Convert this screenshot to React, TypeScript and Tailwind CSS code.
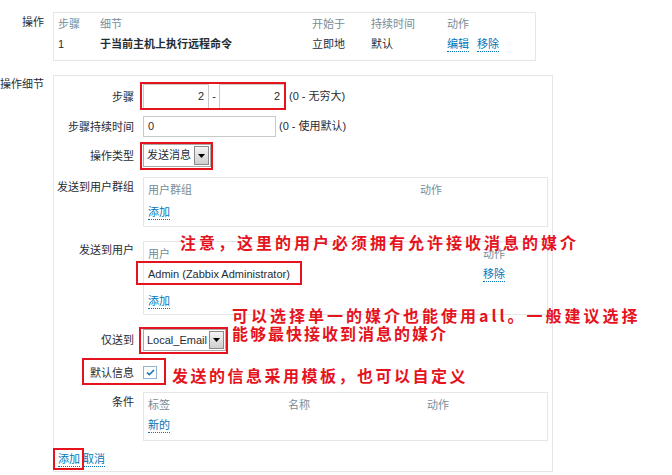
import React from "react";

const font = { fontFamily: '"Liberation Sans", "Noto Sans CJK SC", sans-serif' };
const noteFont = { fontFamily: '"Noto Sans CJK SC", sans-serif' };

function Link({ children }: { children: React.ReactNode }) {
  return (
    <span className="text-[#0275b8] border-b border-dotted border-[#0275b8] leading-[14px] inline-block">
      {children}
    </span>
  );
}

function RedBox({ className }: { className: string }) {
  return <div className={"absolute border-2 border-[#e5131d] pointer-events-none " + className} />;
}

function Arrow() {
  return (
    <div className="h-full w-[15px] border border-[#8a8a8a] bg-gradient-to-b from-[#f4f4f4] to-[#cfcfcf] flex items-center justify-center">
      <svg width="7" height="4" viewBox="0 0 7 4">
        <path d="M0 0h7L3.5 4z" fill="#000" />
      </svg>
    </div>
  );
}

function Select({ value, width }: { value: string; width: string }) {
  return (
    <div className={"flex items-center h-full border border-[#a9a9a9] bg-white pl-[3px] pr-[1px] py-[1px] " + width}>
      <span className="flex-1 text-[#1f2c33]">{value}</span>
      <Arrow />
    </div>
  );
}

function Label({ children, className = "" }: { children: React.ReactNode; className?: string }) {
  return <div className={"w-[80px] shrink-0 text-right leading-[18px] " + className}>{children}</div>;
}

export default function App() {
  return (
    <div className="relative w-[672px] h-[475px] bg-white text-[11px] text-[#1f2c33] overflow-hidden" style={font}>
      {/* 操作 */}
      <div className="flex pt-[12px]">
        <div className="w-[53px] pr-[9px] text-right pt-[1px] leading-[18px]">操作</div>
        <div className="w-[483px] h-[49px] border border-[#e6e6e6] px-[4px] pt-[2px]">
          <div className="grid grid-cols-[42px_212px_59px_76px_1fr] text-[#768d99] leading-[18px]">
            <span>步骤</span>
            <span>细节</span>
            <span>开始于</span>
            <span>持续时间</span>
            <span>动作</span>
          </div>
          <div className="grid grid-cols-[42px_212px_59px_76px_1fr] items-center h-[22px]">
            <span>1</span>
            <span className="font-bold">于当前主机上执行远程命令</span>
            <span>立即地</span>
            <span>默认</span>
            <span className="flex gap-[8px]">
              <Link>编辑</Link>
              <Link>移除</Link>
            </span>
          </div>
        </div>
      </div>

      {/* 操作细节 */}
      <div className="flex mt-[14px]">
        <div className="w-[53px] pr-[9px] text-right leading-[18px]">操作细节</div>
        <div className="w-[500px] h-[397px] border border-[#e6e6e6] flex flex-col">
          {/* 步骤 */}
          <div className="flex items-center mt-[8px] h-[25px]">
            <Label>步骤</Label>
            <div className="relative flex items-center ml-[9px] h-full">
              <div className="w-[66px] h-full border border-[#c9c9c9] flex items-center justify-end pr-[4px]">2</div>
              <span className="w-[10px] text-center">-</span>
              <div className="w-[66px] h-full border border-[#c9c9c9] flex items-center justify-end pr-[4px]">2</div>
              <RedBox className="left-[-3px] top-[-2px] w-[146px] h-[28px]" />
            </div>
            <span className="ml-[4px]">(0 - 无穷大)</span>
          </div>

          {/* 步骤持续时间 */}
          <div className="flex items-center mt-[7px] h-[21px]">
            <Label>步骤持续时间</Label>
            <div className="ml-[9px] w-[133px] h-full border border-[#c9c9c9] flex items-center pl-[4px]">0</div>
            <span className="ml-[3px]">(0 - 使用默认)</span>
          </div>

          {/* 操作类型 */}
          <div className="flex items-center mt-[7px] h-[23px]">
            <Label>操作类型</Label>
            <div className="relative ml-[9px] h-full">
              <Select value="发送消息" width="w-[68px]" />
              <RedBox className="left-[-3px] top-[-2px] w-[73px] h-[28px]" />
            </div>
          </div>

          {/* 发送到用户群组 */}
          <div className="flex items-start mt-[10px]">
            <Label className="pt-[1px]">发送到用户群组</Label>
            <div className="ml-[9px] w-[405px] h-[50px] border border-[#e6e6e6] px-[4px] pt-[3px]">
              <div className="flex leading-[18px] text-[#768d99]">
                <span className="w-[272px]">用户群组</span>
                <span>动作</span>
              </div>
              <div className="h-[22px] mt-[2px] flex items-center">
                <Link>添加</Link>
              </div>
            </div>
          </div>

          {/* 发送到用户 */}
          <div className="flex items-start mt-[14px]">
            <Label>发送到用户</Label>
            <div className="ml-[9px] w-[405px] h-[74px] border border-[#e6e6e6] px-[4px] pt-[3px]">
              <div className="flex leading-[18px] text-[#768d99]">
                <span className="w-[335px]">用户</span>
                <span>动作</span>
              </div>
              <div className="relative h-[22px] flex items-center">
                <span className="w-[335px]">Admin (Zabbix Administrator)</span>
                <Link>移除</Link>
                <RedBox className="left-[-12px] top-[-2px] w-[166px] h-[24px]" />
              </div>
              <div className="h-[24px] mt-[4px] flex items-center">
                <Link>添加</Link>
              </div>
            </div>
          </div>

          {/* 仅送到 */}
          <div className="flex items-center mt-[14px] h-[22px]">
            <Label>仅送到</Label>
            <div className="relative ml-[9px] h-full">
              <Select value="Local_Email" width="w-[83px]" />
              <RedBox className="left-[-4px] top-[-2px] w-[89px] h-[27px]" />
            </div>
          </div>

          {/* 默认信息 */}
          <div className="relative flex items-center mt-[15px] h-[13px]">
            <Label>默认信息</Label>
            <div className="ml-[9px] w-[14px] h-[13px] border border-[#8fb4d3] bg-white flex items-center justify-center">
              <svg width="9" height="7" viewBox="0 0 9 7">
                <path d="M1 3.5l2.3 2.2L8 1" stroke="#1170b6" strokeWidth="1.6" fill="none" />
              </svg>
            </div>
            <RedBox className="left-[28px] top-[-8px] w-[84px] h-[27px]" />
          </div>

          {/* 条件 */}
          <div className="flex items-start mt-[13px]">
            <Label className="pt-[1px]">条件</Label>
            <div className="ml-[9px] w-[405px] h-[49px] border border-[#e6e6e6] px-[4px] pt-[3px]">
              <div className="flex leading-[18px] text-[#768d99]">
                <span className="w-[140px]">标签</span>
                <span className="w-[139px]">名称</span>
                <span>动作</span>
              </div>
              <div className="h-[22px] flex items-center">
                <Link>新的</Link>
              </div>
            </div>
          </div>

          {/* 添加 取消 */}
          <div className="relative flex items-center gap-[3px] mt-[7px] h-[22px] pl-[4px]">
            <Link>添加</Link>
            <Link>取消</Link>
            <RedBox className="left-[-1px] top-0 w-[31px] h-[22px]" />
          </div>
        </div>
      </div>

      {/* annotations */}
      <div
        className="absolute left-[180px] top-[233px] text-[16px] leading-[18px] font-semibold tracking-[3px] text-[#e5131d] whitespace-nowrap"
        style={noteFont}
      >
        注意，这里的用户必须拥有允许接收消息的媒介
      </div>
      <div
        className="absolute left-[232px] top-[306px] text-[16px] leading-[18px] font-semibold tracking-[3px] text-[#e5131d] whitespace-nowrap"
        style={noteFont}
      >
        <div>可以选择单一的媒介也能使用all。一般建议选择</div>
        <div className="tracking-[2px]">能够最快接收到消息的媒介</div>
      </div>
      <div
        className="absolute left-[172px] top-[366px] text-[16px] leading-[18px] font-semibold tracking-[2.5px] text-[#e5131d] whitespace-nowrap"
        style={noteFont}
      >
        发送的信息采用模板，也可以自定义
      </div>
    </div>
  );
}
